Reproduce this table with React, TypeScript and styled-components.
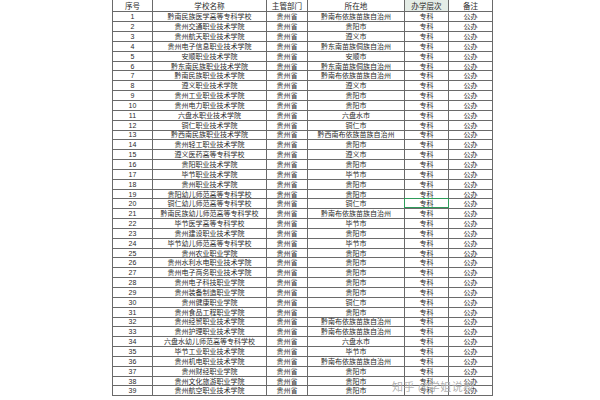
import React from 'react';
import styled, { createGlobalStyle, css } from 'styled-components';

const GlobalStyle = createGlobalStyle`
  html, body {
    margin: 0;
    padding: 0;
    background: #ffffff;
  }
  body {
    width: 600px;
    height: 400px;
    overflow: hidden;
    font-family: "Noto Sans CJK SC", "Liberation Sans", sans-serif;
  }
`;

const COLS = '40px 114px 41px 97px 44px 44px';
const ROW_H = 9.85;

const Page = styled.div`
  position: relative;
  width: 600px;
  height: 400px;
  display: flex;
  flex-direction: column;
  padding-left: 112px;
  box-sizing: border-box;
`;

const Sheet = styled.div`
  display: grid;
  grid-template-columns: ${COLS};
  width: max-content;
  border-left: 1px solid #6a6a6a;
`;

const Row = styled.div<{ $header?: boolean }>`
  display: contents;
`;

const Cell = styled.div<{ $header?: boolean; $tint?: boolean; $selected?: boolean }>`
  position: relative;
  box-sizing: border-box;
  height: ${({ $header }) => ($header ? '12.4px' : `${ROW_H}px`)};
  border-right: 1px solid #6a6a6a;
  border-bottom: 1px solid #6a6a6a;
  display: flex;
  align-items: center;
  justify-content: center;
  white-space: nowrap;
  overflow: visible;
  color: #2a2a2a;
  font-size: ${({ $header }) => ($header ? '7.6px' : '7px')};
  line-height: 1;
  background: ${({ $tint }) => ($tint ? '#e4ece6' : '#ffffff')};
  ${({ $selected }) =>
    $selected &&
    css`
      &::after {
        content: '';
        position: absolute;
        inset: -1px -1px 0 -1px;
        border: 1.5px solid #2f9a5a;
      }
    `}
`;

const Num = styled.span`
  font-family: "Liberation Sans", sans-serif;
  font-size: 7px;
`;

const Faint = styled.div`
  width: 380px;
  height: 0;
  margin-top: 4px;
  border-top: 1px dashed #d8d8d8;
`;

const Watermark = styled.div`
  position: absolute;
  left: 392px;
  top: 378px;
  font-size: 11px;
  color: rgba(110, 110, 110, 0.55);
  letter-spacing: 0.5px;
  white-space: nowrap;
  text-shadow: 0 0 1px rgba(255, 255, 255, 0.8);
`;

type School = [string, string];

const schools: School[] = [
  ['黔南民族医学高等专科学校', '黔南布依族苗族自治州'],
  ['贵州交通职业技术学院', '贵阳市'],
  ['贵州航天职业技术学院', '遵义市'],
  ['贵州电子信息职业技术学院', '黔东南苗族侗族自治州'],
  ['安顺职业技术学院', '安顺市'],
  ['黔东南民族职业技术学院', '黔东南苗族侗族自治州'],
  ['黔南民族职业技术学院', '黔南布依族苗族自治州'],
  ['遵义职业技术学院', '遵义市'],
  ['贵州工业职业技术学院', '贵阳市'],
  ['贵州电力职业技术学院', '贵阳市'],
  ['六盘水职业技术学院', '六盘水市'],
  ['铜仁职业技术学院', '铜仁市'],
  ['黔西南民族职业技术学院', '黔西南布依族苗族自治州'],
  ['贵州轻工职业技术学院', '贵阳市'],
  ['遵义医药高等专科学校', '遵义市'],
  ['贵阳职业技术学院', '贵阳市'],
  ['毕节职业技术学院', '毕节市'],
  ['贵州职业技术学院', '贵阳市'],
  ['贵阳幼儿师范高等专科学校', '贵阳市'],
  ['铜仁幼儿师范高等专科学校', '铜仁市'],
  ['黔南民族幼儿师范高等专科学校', '黔南布依族苗族自治州'],
  ['毕节医学高等专科学校', '毕节市'],
  ['贵州建设职业技术学院', '贵阳市'],
  ['毕节幼儿师范高等专科学校', '毕节市'],
  ['贵州农业职业学院', '贵阳市'],
  ['贵州水利水电职业技术学院', '贵阳市'],
  ['贵州电子商务职业技术学院', '贵阳市'],
  ['贵州电子科技职业学院', '贵阳市'],
  ['贵州装备制造职业学院', '贵阳市'],
  ['贵州健康职业学院', '铜仁市'],
  ['贵州食品工程职业学院', '贵阳市'],
  ['贵州经贸职业技术学院', '黔南布依族苗族自治州'],
  ['贵州护理职业技术学院', '黔南布依族苗族自治州'],
  ['六盘水幼儿师范高等专科学校', '六盘水市'],
  ['毕节工业职业技术学院', '毕节市'],
  ['贵州机电职业技术学院', '黔南布依族苗族自治州'],
  ['贵州财经职业学院', '贵阳市'],
  ['贵州文化旅游职业学院', '贵阳市'],
  ['贵州航空职业技术学院', '贵阳市'],
];

const headers = ['序号', '学校名称', '主管部门', '所在地', '办学层次', '备注'];

export default function App() {
  return (
    <>
      <GlobalStyle />
      <Page>
        <Sheet>
          <Row $header>
            {headers.map((h, i) => (
              <Cell key={h} $header $tint={i === 4}>
                {h}
              </Cell>
            ))}
          </Row>
          {schools.map(([name, city], i) => (
            <Row key={name}>
              <Cell>
                <Num>{i + 1}</Num>
              </Cell>
              <Cell>{name}</Cell>
              <Cell>贵州省</Cell>
              <Cell>{city}</Cell>
              <Cell $selected={i === 19}>专科</Cell>
              <Cell>公办</Cell>
            </Row>
          ))}
        </Sheet>
        <Faint />
        <Watermark>知乎 @学姐说校</Watermark>
      </Page>
    </>
  );
}
